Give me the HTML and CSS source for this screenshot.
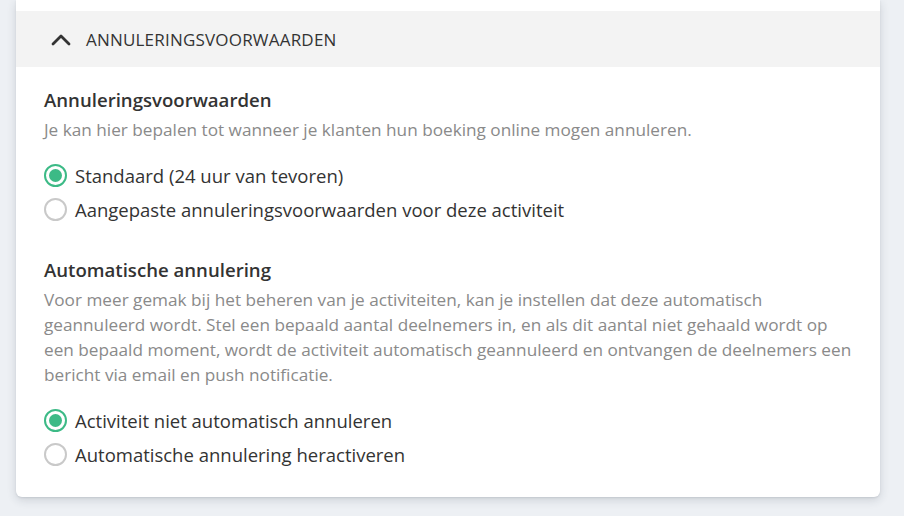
FILE: index.html
```html
<!DOCTYPE html>
<html lang="nl">
<head>
<meta charset="utf-8">
<link rel="stylesheet" href="styles.css">
</head>
<body>
<div class="page">
  <div class="card">
    <div class="card-top"></div>
    <div class="section-header">
      <svg class="chevron" width="20" height="13" viewBox="0 0 20 13"><path d="M2 11 L10 3 L18 11" fill="none" stroke="#333" stroke-width="2.8" stroke-linecap="round" stroke-linejoin="round"/></svg>
      <span class="section-title">ANNULERINGSVOORWAARDEN</span>
    </div>
    <div class="section-body">
      <h3 class="group-title">Annuleringsvoorwaarden</h3>
      <p class="group-desc">Je kan hier bepalen tot wanneer je klanten hun boeking online mogen annuleren.</p>
      <div class="radios">
        <label class="radio"><span class="dot checked"></span>Standaard (24 uur van tevoren)</label>
        <label class="radio"><span class="dot"></span>Aangepaste annuleringsvoorwaarden voor deze activiteit</label>
      </div>
      <h3 class="group-title second">Automatische annulering</h3>
      <p class="group-desc">Voor meer gemak bij het beheren van je activiteiten, kan je instellen dat deze automatisch<br>geannuleerd wordt. Stel een bepaald aantal deelnemers in, en als dit aantal niet gehaald wordt op<br>een bepaald moment, wordt de activiteit automatisch geannuleerd en ontvangen de deelnemers een<br>bericht via email en push notificatie.</p>
      <div class="radios">
        <label class="radio"><span class="dot checked"></span>Activiteit niet automatisch annuleren</label>
        <label class="radio"><span class="dot"></span>Automatische annulering heractiveren</label>
      </div>
    </div>
  </div>
</div>
</body>
</html>
```

FILE: styles.css
```css
html, body {
  margin: 0;
  padding: 0;
  background: #edf0f4;
  font-family: "Open Sans", "Noto Sans", sans-serif;
  color: #333;
}
.page {
  padding: 0 24px 18px 16px;
}
.card {
  background: #fff;
  border-radius: 0 0 6px 6px;
  box-shadow: 0 3px 10px rgba(40, 50, 70, 0.16), 0 1px 2px rgba(40, 50, 70, 0.10);
}
.card-top {
  height: 11px;
}
.section-header {
  height: 56px;
  background: #f3f3f3;
  display: flex;
  align-items: center;
  padding-left: 35px;
  gap: 15px;
}
.chevron {
  display: block;
}
.section-title {
  font-size: 17px;
  letter-spacing: 0.2px;
  color: #333;
}
.section-body {
  padding: 21px 28px 26px 28px;
}
.group-title {
  margin: 0 0 5px 0;
  font-size: 18.6px;
  line-height: 24px;
  font-weight: 600;
  color: #333;
}
.group-title.second {
  margin-top: 32px;
}
.group-desc {
  margin: 0;
  font-size: 17.2px;
  line-height: 25px;
  color: #8a8a8a;
  white-space: nowrap;
}
.radios {
  margin-top: 16px;
  display: flex;
  flex-direction: column;
}
.radio {
  height: 34px;
  display: flex;
  align-items: center;
  gap: 8px;
  font-size: 18.5px;
  color: #333;
}
.dot {
  width: 23px;
  height: 23px;
  box-sizing: border-box;
  border: 2px solid #c9c9c9;
  border-radius: 50%;
  flex: none;
  display: flex;
  align-items: center;
  justify-content: center;
}
.dot.checked {
  border-color: #3cba86;
}
.dot.checked::after {
  content: "";
  width: 13px;
  height: 13px;
  border-radius: 50%;
  background: #3cba86;
}
```
